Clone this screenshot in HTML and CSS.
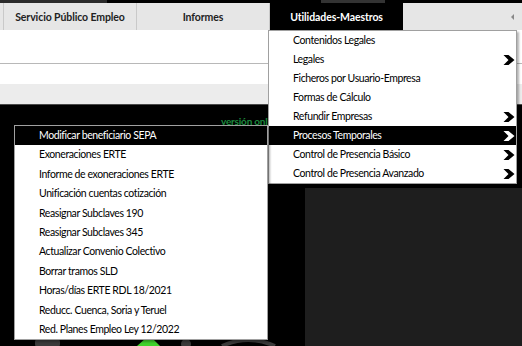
FILE: index.html
```html
<!DOCTYPE html>
<html lang="es">
<head>
  <meta charset="UTF-8" />
  <title>Utilidades-Maestros</title>
  <link rel="stylesheet" href="styles.css">
</head>
<body>
  <div class="topstrip"></div>

  <nav class="navbar">
    <div class="nav-edge"></div>
    <div class="nav-item">Servicio Público Empleo</div>
    <div class="nav-item">Informes</div>
    <div class="nav-item active">Utilidades-Maestros</div>
    <div class="nav-rest"><span class="nav-arrow"></span></div>
  </nav>

  <div class="row row-top"></div>
  <div class="row row-mid"></div>
  <div class="row row-low"></div>

  <main class="workspace">
    <div class="left">
      <p class="version">versión online</p>
      <svg class="logo" width="305" height="10" viewBox="0 0 305 10">
        <rect x="35" y="3" width="25" height="8" rx="3" fill="#3a3a3a"/>
        <path d="M137 10 L146 2 L152 2 L160 10 Z" fill="#3fd12a"/>
        <circle cx="186" cy="8" r="5" fill="#3a3a3a"/>
        <path d="M222 10 Q248 -2 275 10" stroke="#3a3a3a" stroke-width="4" fill="none"/>
      </svg>
    </div>
    <div class="right">
      <div class="panel"></div>
    </div>
  </main>

  <!-- menu desplegado -->
  <ul class="menu main-menu">
    <li>Contenidos Legales</li>
    <li>Legales <svg class="chev" viewBox="0 0 11 10"><polygon points="0,0 5,0 11,5 5,10 0,10 5,5"/></svg></li>
    <li>Ficheros por Usuario-Empresa</li>
    <li>Formas de Cálculo</li>
    <li>Refundir Empresas <svg class="chev" viewBox="0 0 11 10"><polygon points="0,0 5,0 11,5 5,10 0,10 5,5"/></svg></li>
    <li class="sel">Procesos Temporales <svg class="chev" viewBox="0 0 11 10"><polygon points="0,0 5,0 11,5 5,10 0,10 5,5"/></svg></li>
    <li>Control de Presencia Básico <svg class="chev" viewBox="0 0 11 10"><polygon points="0,0 5,0 11,5 5,10 0,10 5,5"/></svg></li>
    <li>Control de Presencia Avanzado <svg class="chev" viewBox="0 0 11 10"><polygon points="0,0 5,0 11,5 5,10 0,10 5,5"/></svg></li>
  </ul>

  <!-- submenu de Procesos Temporales -->
  <ul class="menu sub-menu">
    <li class="sel">Modificar beneficiario SEPA</li>
    <li>Exoneraciones ERTE</li>
    <li>Informe de exoneraciones ERTE</li>
    <li>Unificación cuentas cotización</li>
    <li>Reasignar Subclaves 190</li>
    <li>Reasignar Subclaves 345</li>
    <li>Actualizar Convenio Colectivo</li>
    <li>Borrar tramos SLD</li>
    <li>Horas/días ERTE RDL 18/2021</li>
    <li>Reducc. Cuenca, Soria y Teruel</li>
    <li>Red. Planes Empleo Ley 12/2022</li>
  </ul>
</body>
</html>
```

FILE: styles.css
```css
body {
  margin: 0;
  width: 522px;
  height: 346px;
  overflow: hidden;
  position: relative;
  display: flex;
  flex-direction: column;
  font-family: Lato, 'Noto Sans', sans-serif;
  font-size: 10.5px;
  letter-spacing: -0.4px;
  background: #000;
  color: #000;
}

.topstrip {
  height: 3px;
  flex: none;
  background: linear-gradient(to right, #2b2b2b 0 107px, #000 107px 321px, #333 321px 385px, #000 385px);
}

.navbar {
  height: 27px;
  flex: none;
  display: flex;
  background: #e6e6e6;
}

.nav-edge {
  width: 3px;
  border-right: 1px solid #c9c9c9;
}

.nav-item {
  width: 132px;
  display: flex;
  align-items: center;
  justify-content: center;
  font-size: 10.5px;
  letter-spacing: -0.1px;
  font-weight: bold;
  color: #222;
  border-right: 1px solid #c9c9c9;
}

.nav-item.active {
  width: 133px;
  background: #000;
  color: #fff;
  border-right: none;
}

.nav-rest {
  flex: 1;
  display: flex;
  align-items: center;
  justify-content: flex-end;
  padding-right: 8px;
}

.nav-arrow {
  width: 0;
  height: 0;
  border-top: 3px solid transparent;
  border-bottom: 3px solid transparent;
  border-right: 3px solid #888;
}

.row {
  flex: none;
  background: #fff;
}

.row-top {
  height: 33px;
  border-bottom: 1px solid #b8b8b8;
}

.row-mid {
  height: 20px;
}

.row-low {
  height: 20px;
  background: #ececec;
  border-bottom: 1px solid #4a4a4a;
}

.workspace {
  flex: 1;
  display: grid;
  grid-template-columns: 305px 1fr;
  background: #000;
}

.left {
  display: flex;
  flex-direction: column;
  justify-content: space-between;
}

.version {
  margin: 10px 0 0 221px;
  white-space: nowrap;
  font-size: 10px;
  letter-spacing: -0.2px;
  font-weight: bold;
  color: #1c8a3e;
}

.logo {
  display: block;
}

.right {
  padding-top: 83px;
  display: flex;
}

.panel {
  flex: 1;
  background: #1e1e1e;
}

.menu {
  position: absolute;
  margin: 0;
  padding: 0;
  list-style: none;
  background: #fff;
  border: 1px solid #a0a0a0;
  box-shadow: 2px 2px 2px rgba(0, 0, 0, 0.3);
}

.menu li {
  position: relative;
  height: 19px;
  line-height: 19px;
  padding-left: 24px;
  white-space: nowrap;
}

.menu li.sel {
  background: #000;
  color: #fff;
}

.main-menu {
  left: 268px;
  top: 30px;
  width: 247px;
}

.sub-menu {
  left: 14px;
  top: 125px;
  width: 252px;
}

.sub-menu li {
  height: 19.4px;
  line-height: 19.4px;
}

.chev {
  position: absolute;
  right: 1px;
  top: 4.5px;
  width: 12px;
  height: 10px;
  fill: #000;
}

.sel .chev {
  fill: #fff;
}
```
